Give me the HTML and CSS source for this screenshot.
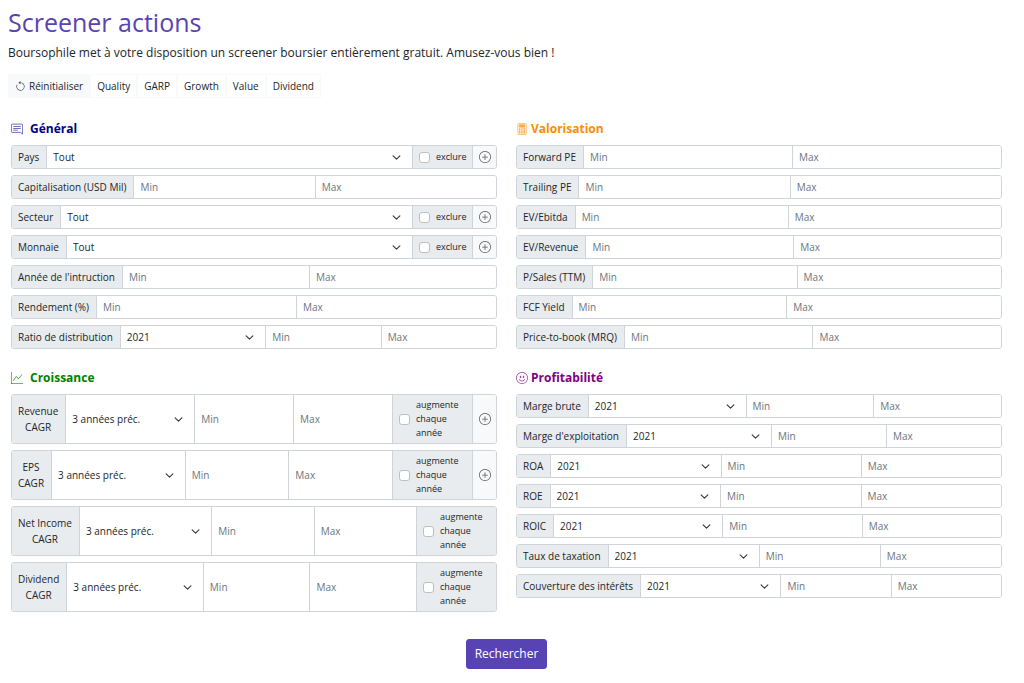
FILE: index.html
```html
<!DOCTYPE html>
<html lang="fr">
<head>
<meta charset="utf-8">
<title>Screener actions</title>
<link rel="stylesheet" href="styles.css">
</head>
<body>
<svg class="sprite" aria-hidden="true">
  <symbol id="plus" viewBox="0 0 16 16"><path d="M8 15A7 7 0 1 1 8 1a7 7 0 0 1 0 14zm0 1A8 8 0 1 0 8 0a8 8 0 0 0 0 16z"/><path d="M8 4a.5.5 0 0 1 .5.5v3h3a.5.5 0 0 1 0 1h-3v3a.5.5 0 0 1-1 0v-3h-3a.5.5 0 0 1 0-1h3v-3A.5.5 0 0 1 8 4z"/></symbol>
</svg>
<main class="page">
  <h1 class="title">Screener actions</h1>
  <p class="lead">Boursophile met à votre disposition un screener boursier entièrement gratuit. Amusez-vous bien !</p>
  <div class="toolbar">
    <button type="button" class="preset preset-reset"><svg class="reset-icon" viewBox="0 0 16 16"><path d="M8 3a5 5 0 1 1-4.546 2.914.5.5 0 0 0-.908-.417A6 6 0 1 0 8 2v1z"/><path d="M8 4.466V.534a.25.25 0 0 0-.41-.192L5.23 2.308a.25.25 0 0 0 0 .384l2.36 1.966A.25.25 0 0 0 8 4.466z"/></svg>Réinitialiser</button>
    <button type="button" class="preset">Quality</button>
    <button type="button" class="preset">GARP</button>
    <button type="button" class="preset">Growth</button>
    <button type="button" class="preset">Value</button>
    <button type="button" class="preset">Dividend</button>
  </div>

  <form class="screener">
    <div class="grid">
      <section class="group">
        <h2 class="heading general"><svg class="icon" viewBox="0 0 16 16"><path fill="none" stroke="currentColor" d="M.5 2.5a1 1 0 0 1 1-1h13a1 1 0 0 1 1 1v12.3l-2.6-2.3H1.500a1 1 0 0 1-1-1z"/><path d="M3 4h10v1H3zM3 6.500h10v1H3zM3 9h6v1H3z"/></svg>Général</h2>
        <div class="row"><label class="tag" for="pays">Pays</label><select class="select" id="pays"><option>Tout</option></select><label class="check"><input type="checkbox">exclure</label><button type="button" class="add" aria-label="Ajouter"><svg viewBox="0 0 16 16"><use href="#plus"/></svg></button></div>
        <div class="row"><label class="tag" for="cap">Capitalisation (USD Mil)</label><input class="input" id="cap" placeholder="Min"><input class="input" placeholder="Max" aria-label="Capitalisation max"></div>
        <div class="row"><label class="tag" for="secteur">Secteur</label><select class="select" id="secteur"><option>Tout</option></select><label class="check"><input type="checkbox">exclure</label><button type="button" class="add" aria-label="Ajouter"><svg viewBox="0 0 16 16"><use href="#plus"/></svg></button></div>
        <div class="row"><label class="tag" for="monnaie">Monnaie</label><select class="select" id="monnaie"><option>Tout</option></select><label class="check"><input type="checkbox">exclure</label><button type="button" class="add" aria-label="Ajouter"><svg viewBox="0 0 16 16"><use href="#plus"/></svg></button></div>
        <div class="row"><label class="tag" for="annee">Année de l'intruction</label><input class="input" id="annee" placeholder="Min"><input class="input" placeholder="Max" aria-label="Année max"></div>
        <div class="row"><label class="tag" for="rendement">Rendement (%)</label><input class="input" id="rendement" placeholder="Min"><input class="input" placeholder="Max" aria-label="Rendement max"></div>
        <div class="row"><label class="tag" for="ratio">Ratio de distribution</label><select class="select" id="ratio"><option>2021</option></select><input class="input" placeholder="Min" aria-label="Ratio min"><input class="input" placeholder="Max" aria-label="Ratio max"></div>
      </section>

      <section class="group">
        <h2 class="heading valuation"><svg class="icon" viewBox="0 0 16 16"><g fill="none" stroke="currentColor"><rect x="2.500" y=".5" width="11" height="15" rx="1.500"/><rect x="4.500" y="2.500" width="7" height="3" fill="currentColor"/></g><path d="M4 7h2v2H4zM7 7h2v2H7zM10 7h2v2h-2zM4 9.500h2v2H4zM7 9.500h2v2H7zM4 12h2v2H4zM7 12h2v2H7zM10 9.500h2V14h-2z"/></svg>Valorisation</h2>
        <div class="row"><label class="tag" for="fpe">Forward PE</label><input class="input" id="fpe" placeholder="Min"><input class="input" placeholder="Max" aria-label="Forward PE max"></div>
        <div class="row"><label class="tag" for="tpe">Trailing PE</label><input class="input" id="tpe" placeholder="Min"><input class="input" placeholder="Max" aria-label="Trailing PE max"></div>
        <div class="row"><label class="tag" for="ebitda">EV/Ebitda</label><input class="input" id="ebitda" placeholder="Min"><input class="input" placeholder="Max" aria-label="EV/Ebitda max"></div>
        <div class="row"><label class="tag" for="evrev">EV/Revenue</label><input class="input" id="evrev" placeholder="Min"><input class="input" placeholder="Max" aria-label="EV/Revenue max"></div>
        <div class="row"><label class="tag" for="ps">P/Sales (TTM)</label><input class="input" id="ps" placeholder="Min"><input class="input" placeholder="Max" aria-label="P/Sales max"></div>
        <div class="row"><label class="tag" for="fcf">FCF Yield</label><input class="input" id="fcf" placeholder="Min"><input class="input" placeholder="Max" aria-label="FCF Yield max"></div>
        <div class="row"><label class="tag" for="ptb">Price-to-book (MRQ)</label><input class="input" id="ptb" placeholder="Min"><input class="input" placeholder="Max" aria-label="Price-to-book max"></div>
      </section>

      <section class="group">
        <h2 class="heading growth"><svg class="icon" viewBox="0 0 16 16"><path d="M0 0h1v15h15v1H0V0zm14.817 3.113a.5.5 0 0 1 .07.704l-4.500 5.500a.5.5 0 0 1-.74.037L7.060 6.767l-3.656 5.027a.5.5 0 0 1-.808-.588l4-5.500a.5.5 0 0 1 .758-.06l2.609 2.610 4.150-5.073a.5.5 0 0 1 .704-.07z"/></svg>Croissance</h2>
        <div class="row"><label class="tag" for="rev">Revenue<br>CAGR</label><select class="select" id="rev"><option>3 années préc.</option></select><input class="input" placeholder="Min" aria-label="Revenue min"><input class="input" placeholder="Max" aria-label="Revenue max"><label class="check check-tall"><input type="checkbox">augmente chaque année</label><button type="button" class="add" aria-label="Ajouter"><svg viewBox="0 0 16 16"><use href="#plus"/></svg></button></div>
        <div class="row"><label class="tag" for="eps">EPS<br>CAGR</label><select class="select" id="eps"><option>3 années préc.</option></select><input class="input" placeholder="Min" aria-label="EPS min"><input class="input" placeholder="Max" aria-label="EPS max"><label class="check check-tall"><input type="checkbox">augmente chaque année</label><button type="button" class="add" aria-label="Ajouter"><svg viewBox="0 0 16 16"><use href="#plus"/></svg></button></div>
        <div class="row"><label class="tag" for="net">Net Income<br>CAGR</label><select class="select" id="net"><option>3 années préc.</option></select><input class="input" placeholder="Min" aria-label="Net Income min"><input class="input" placeholder="Max" aria-label="Net Income max"><label class="check check-tall"><input type="checkbox">augmente chaque année</label></div>
        <div class="row"><label class="tag" for="div">Dividend<br>CAGR</label><select class="select" id="div"><option>3 années préc.</option></select><input class="input" placeholder="Min" aria-label="Dividend min"><input class="input" placeholder="Max" aria-label="Dividend max"><label class="check check-tall"><input type="checkbox">augmente chaque année</label></div>
      </section>

      <section class="group">
        <h2 class="heading profit"><svg class="icon" viewBox="0 0 16 16"><path d="M8 15A7 7 0 1 1 8 1a7 7 0 0 1 0 14zm0 1A8 8 0 1 0 8 0a8 8 0 0 0 0 16z"/><path d="M4.285 9.567a.5.5 0 0 1 .683.183A3.498 3.498 0 0 0 8 11.500a3.498 3.498 0 0 0 3.032-1.750.5.5 0 1 1 .866.5A4.498 4.498 0 0 1 8 12.500a4.498 4.498 0 0 1-3.898-2.250.5.5 0 0 1 .183-.683zM7 6.500C7 7.328 6.552 8 6 8s-1-.672-1-1.500S5.448 5 6 5s1 .672 1 1.500zm4 0c0 .828-.448 1.500-1 1.500s-1-.672-1-1.500S9.448 5 10 5s1 .672 1 1.500z"/></svg>Profitabilité</h2>
        <div class="row"><label class="tag" for="mb">Marge brute</label><select class="select" id="mb"><option>2021</option></select><input class="input" placeholder="Min" aria-label="Marge brute min"><input class="input" placeholder="Max" aria-label="Marge brute max"></div>
        <div class="row"><label class="tag" for="me">Marge d'exploitation</label><select class="select" id="me"><option>2021</option></select><input class="input" placeholder="Min" aria-label="Marge d'exploitation min"><input class="input" placeholder="Max" aria-label="Marge d'exploitation max"></div>
        <div class="row"><label class="tag" for="roa">ROA</label><select class="select" id="roa"><option>2021</option></select><input class="input" placeholder="Min" aria-label="ROA min"><input class="input" placeholder="Max" aria-label="ROA max"></div>
        <div class="row"><label class="tag" for="roe">ROE</label><select class="select" id="roe"><option>2021</option></select><input class="input" placeholder="Min" aria-label="ROE min"><input class="input" placeholder="Max" aria-label="ROE max"></div>
        <div class="row"><label class="tag" for="roic">ROIC</label><select class="select" id="roic"><option>2021</option></select><input class="input" placeholder="Min" aria-label="ROIC min"><input class="input" placeholder="Max" aria-label="ROIC max"></div>
        <div class="row"><label class="tag" for="tax">Taux de taxation</label><select class="select" id="tax"><option>2021</option></select><input class="input" placeholder="Min" aria-label="Taux de taxation min"><input class="input" placeholder="Max" aria-label="Taux de taxation max"></div>
        <div class="row"><label class="tag" for="cov">Couverture des intérêts</label><select class="select" id="cov"><option>2021</option></select><input class="input" placeholder="Min" aria-label="Couverture min"><input class="input" placeholder="Max" aria-label="Couverture max"></div>
      </section>
    </div>
    <button type="submit" class="submit">Rechercher</button>
  </form>
</main>
</body>
</html>
```
FILE: styles.css
```css
* {
  box-sizing: border-box;
}

body {
  margin: 0;
  background: #fff;
  color: #212529;
  font: 10px/16px "Open Sans", "Noto Sans", sans-serif;
}

button,
input,
select {
  font: inherit;
  color: inherit;
  margin: 0;
}

.sprite {
  display: none;
}

svg {
  fill: currentColor;
}

.page {
  padding: 7px 19px 16px 8px;
}

.title {
  margin: 0 0 7px;
  color: #5843b5;
  font-size: 25px;
  font-weight: 400;
  line-height: 30px;
}

.lead {
  margin: 0 0 12px;
  font-size: 12px;
  line-height: 18px;
}

.toolbar {
  display: flex;
}

.preset {
  height: 24px;
  padding: 0 6px;
  border: 1px solid #f8f9fa;
  background: #fff;
}

.preset-reset {
  display: flex;
  align-items: center;
  gap: 3px;
  background: #f8f9fa;
  border-radius: 3px 0 0 3px;
}

.reset-icon {
  width: 11px;
  height: 11px;
  opacity: 0.8;
}

.screener {
  display: flex;
  flex-direction: column;
  align-items: center;
  padding: 22px 3px 0;
}

.grid {
  display: grid;
  grid-template-columns: 1fr 1fr;
  gap: 20px 19px;
  width: 100%;
}

.group {
  display: flex;
  flex-direction: column;
  gap: 6px;
  min-width: 0;
}

.heading {
  display: flex;
  align-items: center;
  gap: 7px;
  margin: 0 0 2px;
  font-size: 12px;
  font-weight: 700;
  line-height: 17px;
}

.icon {
  width: 12px;
  height: 12px;
  opacity: 0.75;
}

.general {
  color: #00008b;
}

.valuation {
  color: #ff8c00;
}

.growth {
  color: #008000;
}

.profit {
  color: #800080;
}

.valuation,
.profit {
  gap: 3px;
}

.row {
  display: flex;
  min-height: 24px;
  border: 1px solid #ced4da;
  border-radius: 3px;
  overflow: hidden;
}

.row > * + * {
  border: 0;
  border-left: 1px solid #ced4da;
}

.tag {
  display: flex;
  align-items: center;
  padding: 0 7px 0 6px;
  background: #e9ecef;
  text-align: center;
  white-space: nowrap;
}

.input,
.select {
  flex: 1 1 0;
  min-width: 0;
  padding: 0 7px 0 6px;
  border-radius: 0;
  background: #fff;
}

.input::placeholder {
  color: #6c757d;
  opacity: 1;
}

.select {
  appearance: none;
  padding-right: 37px;
  background: #fff url("data:image/svg+xml,%3Csvg xmlns='http://www.w3.org/2000/svg' viewBox='0 0 16 16'%3E%3Cpath fill='none' stroke='%23343a40' stroke-linecap='round' stroke-linejoin='round' stroke-width='2' d='M2 5l6 6 6-6'/%3E%3C/svg%3E") no-repeat right 11px center / 9px 9px;
}

.check {
  display: flex;
  align-items: center;
  gap: 6px;
  width: 60px;
  padding: 0 6px;
  background: #e9ecef;
  font-size: 9px;
  line-height: 14px;
}

.check input {
  flex: none;
  appearance: none;
  width: 11px;
  height: 11px;
  border: 1px solid #bfbfbf;
  border-radius: 3px;
  background: #fff;
}

.check input:checked {
  background: #5843b5;
}

.check-tall {
  width: 80px;
  padding: 3px 6px;
  text-align: left;
}

.add {
  display: flex;
  align-items: center;
  justify-content: center;
  width: 24px;
  padding: 0;
  background: #f8f9fa;
}

.add svg {
  width: 12px;
  height: 12px;
  opacity: 0.75;
}

.submit {
  height: 30px;
  margin-top: 27px;
  padding: 0 8px;
  border: 1px solid #5843b5;
  border-radius: 3px;
  background: #5843b5;
  color: #fff;
  font-size: 12px;
}
```
